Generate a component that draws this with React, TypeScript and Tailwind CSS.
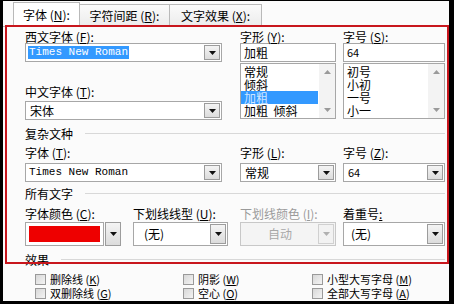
import type { ReactNode } from "react";

const cjk = "font-['Noto_Sans_CJK_SC','Noto_Sans',sans-serif]";
const mono = "font-['Liberation_Mono',monospace]";

function Key({ label, k }: { label: string; k: string }) {
  return (
    <span className="whitespace-nowrap">
      {label} (<span className="underline underline-offset-1">{k}</span>):
    </span>
  );
}

function Label({ children, disabled }: { children: ReactNode; disabled?: boolean }) {
  return (
    <div className={`h-[13px] text-[12px] leading-[13px] ${disabled ? "text-[#9a9a9a]" : "text-black"}`}>
      {children}
    </div>
  );
}

function Arrow({ disabled }: { disabled?: boolean }) {
  return (
    <div
      className={`flex h-full w-[16px] shrink-0 items-center justify-center border ${
        disabled ? "border-[#d0d0d0] bg-[#f2f2f2]" : "border-[#9c9c9c] bg-gradient-to-b from-[#f4f4f4] to-[#dcdcdc]"
      }`}
    >
      <svg width="7" height="4" viewBox="0 0 7 4">
        <path d="M0 0h7L3.5 4z" fill={disabled ? "#b0b0b0" : "#111"} />
      </svg>
    </div>
  );
}

function Combo({
  className,
  children,
  disabled,
}: {
  className: string;
  children?: ReactNode;
  disabled?: boolean;
}) {
  return (
    <div
      className={`flex items-stretch border ${disabled ? "border-[#c8c8c8] bg-[#f4f4f4]" : "border-[#a7a7a7] bg-white"} p-[1px] ${className}`}
    >
      <div className="flex min-w-0 flex-1 items-center overflow-hidden">{children}</div>
      <Arrow disabled={disabled} />
    </div>
  );
}

function ListBox({ items, selected }: { items: string[]; selected?: number }) {
  return (
    <div className="mt-[1px] flex h-[56px] border border-[#a7a7a7] bg-white">
      <div className="flex-1 overflow-hidden pt-[1px]">
        {items.map((it, i) => (
          <div
            key={it}
            className={`mr-[1px] h-[13px] whitespace-pre pl-[3px] text-[12px] leading-[13px] ${
              i === selected ? "bg-[#3399ff] text-[#cfe6ff]" : "text-black"
            }`}
          >
            {it}
          </div>
        ))}
      </div>
      <div className="flex w-[16px] flex-col items-center justify-between bg-[#f3f3f3] py-[6px]">
        <svg width="7" height="4" viewBox="0 0 7 4">
          <path d="M0 4h7L3.5 0z" fill="#9a9a9a" />
        </svg>
        <svg width="7" height="4" viewBox="0 0 7 4">
          <path d="M0 0h7L3.5 4z" fill="#9a9a9a" />
        </svg>
      </div>
    </div>
  );
}

function Section({ title }: { title: string }) {
  return (
    <div className="flex h-[13px] items-center gap-[12px] text-[12px] leading-[13px]">
      <span>{title}</span>
      <div className="h-px flex-1 bg-[#d8d8d8]" />
    </div>
  );
}

function Check({ children }: { children: ReactNode }) {
  return (
    <div className="flex h-[13px] items-center gap-[4px] text-[11px] leading-[13px]">
      <div className="h-[11px] w-[11px] shrink-0 border border-[#9a9a9a] bg-gradient-to-br from-[#d8d8d8] to-[#f4f4f4]" />
      <span>{children}</span>
    </div>
  );
}

export default function App() {
  return (
    <div className={`h-[304px] w-[454px] bg-black pb-[3px] pl-[3px] pr-[5px] pt-[1px] ${cjk}`}>
      <div className="relative h-full bg-[#fbfbfb] text-black">
        {/* tabs */}
        <div className="flex h-[26px] items-end border-b border-[#b9b9b9] pl-[10px]">
          <div className="relative -mb-px flex h-[25px] w-[67px] items-center justify-center border border-b-0 border-[#b9b9b9] bg-white text-[12px]">
            <Key label="字体" k="N" />
          </div>
          <div className="flex h-[22px] w-[90px] items-center justify-center border border-b-0 border-l-0 border-[#b9b9b9] bg-gradient-to-b from-[#fafafa] to-[#ececec] text-[12px]">
            <Key label="字符间距" k="R" />
          </div>
          <div className="flex h-[22px] w-[92px] items-center justify-center border border-b-0 border-l-0 border-[#b9b9b9] bg-gradient-to-b from-[#fafafa] to-[#ececec] text-[12px]">
            <Key label="文字效果" k="X" />
          </div>
        </div>

        <div className="pl-[22px] pr-[4px]">
          {/* western / chinese font */}
          <div className="mt-[3px] flex">
            <div className="w-[197px]">
              <Label>
                <Key label="西文字体" k="F" />
              </Label>
              <Combo className="h-[19px]">
                <span className={`ml-[1px] bg-[#3399ff] px-[1px] text-[11px] leading-[13px] text-white ${mono}`}>
                  Times New Roman
                </span>
              </Combo>
              <div className="mt-[23px]">
                <Label>
                  <Key label="中文字体" k="T" />
                </Label>
              </div>
              <Combo className="mt-[3px] h-[19px]">
                <span className="pl-[3px] text-[12px]">宋体</span>
              </Combo>
            </div>
            <div className="ml-[18px] w-[96px]">
              <Label>
                <Key label="字形" k="Y" />
              </Label>
              <div className="flex h-[19px] items-center border border-[#a7a7a7] bg-white pl-[3px] text-[12px]">加粗</div>
              <ListBox items={["常规", "倾斜", "加粗", "加粗  倾斜"]} selected={2} />
            </div>
            <div className="ml-[7px] w-[102px]">
              <Label>
                <Key label="字号" k="S" />
              </Label>
              <div className="flex h-[19px] items-center border border-[#a7a7a7] bg-white pl-[3px] text-[11px]">64</div>
              <ListBox items={["初号", "小初", "一号", "小一"]} />
            </div>
          </div>

          {/* complex script */}
          <div className="mt-[7px]">
            <Section title="复杂文种" />
          </div>
          <div className="mt-[6px] flex">
            <div className="w-[197px]">
              <Label>
                <Key label="字体" k="T" />
              </Label>
              <Combo className="mt-[4px] h-[19px]">
                <span className={`pl-[2px] text-[11px] ${mono}`}>Times New Roman</span>
              </Combo>
            </div>
            <div className="ml-[18px] w-[96px]">
              <Label>
                <Key label="字形" k="L" />
              </Label>
              <Combo className="mt-[4px] h-[19px]">
                <span className="pl-[3px] text-[12px]">常规</span>
              </Combo>
            </div>
            <div className="ml-[7px] w-[102px]">
              <Label>
                <Key label="字号" k="Z" />
              </Label>
              <Combo className="mt-[4px] h-[19px]">
                <span className="pl-[3px] text-[11px]">64</span>
              </Combo>
            </div>
          </div>

          {/* all text */}
          <div className="mt-[5px]">
            <Section title="所有文字" />
          </div>
          <div className="mt-[7px] flex">
            <div className="w-[95px]">
              <Label>
                <Key label="字体颜色" k="C" />
              </Label>
              <div className="mt-[2px] flex h-[24px]">
                <div className="flex flex-1 border border-[#a7a7a7] bg-white p-[2px]">
                  <div className="flex-1 border border-white bg-[#ee0000]" />
                </div>
                <div className="ml-[1px] w-[15px]">
                  <Arrow />
                </div>
              </div>
            </div>
            <div className="ml-[13px] w-[95px]">
              <Label>
                <Key label="下划线线型" k="U" />
              </Label>
              <Combo className="mt-[2px] h-[24px]">
                <span className="pl-[9px] text-[12px]">(无)</span>
              </Combo>
            </div>
            <div className="ml-[12px] w-[96px]">
              <Label disabled>
                <Key label="下划线颜色" k="I" />
              </Label>
              <Combo className="mt-[2px] h-[24px]" disabled>
                <span className="flex-1 text-center text-[12px] text-[#a8a8a8]">自动</span>
              </Combo>
            </div>
            <div className="ml-[7px] w-[102px]">
              <Label>
                <span>
                  着重号<span className="underline underline-offset-1">:</span>
                </span>
              </Label>
              <Combo className="mt-[2px] h-[24px]">
                <span className="pl-[6px] text-[12px]">(无)</span>
              </Combo>
            </div>
          </div>

          {/* effects */}
          <div className="mt-[7px]">
            <Section title="效果" />
          </div>
          <div className="mt-[7px] grid grid-cols-[148px_129px_1fr] gap-y-[1px] pl-[10px]">
            <Check>
              删除线 (<span className="underline">K</span>)
            </Check>
            <Check>
              阴影 (<span className="underline">W</span>)
            </Check>
            <Check>
              小型大写字母 (<span className="underline">M</span>)
            </Check>
            <Check>
              双删除线 (<span className="underline">G</span>)
            </Check>
            <Check>
              空心 (<span className="underline">O</span>)
            </Check>
            <Check>
              全部大写字母 (<span className="underline">A</span>)
            </Check>
          </div>
        </div>

        {/* red highlight annotation */}
        <div className="pointer-events-none absolute left-[2px] right-0 top-[24px] h-[239px] border-2 border-[#c8161d]" />
      </div>
    </div>
  );
}
